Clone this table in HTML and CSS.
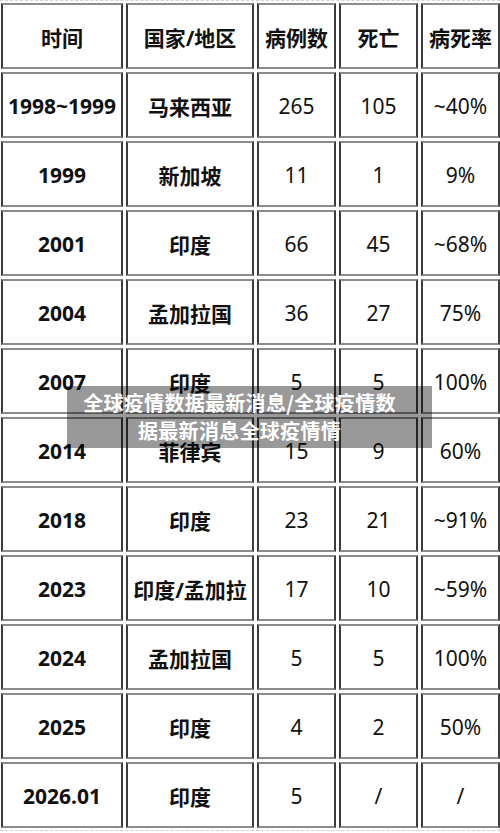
FILE: index.html
```html
<!DOCTYPE html>
<html lang="zh">
<head>
<meta charset="utf-8">
<title>疫情数据</title>
<link rel="stylesheet" href="styles.css">
</head>
<body>
<div class="frame">
  <div class="grid">
    <div class="cell b">时间</div><div class="cell b">国家/地区</div><div class="cell b">病例数</div><div class="cell b">死亡</div><div class="cell b">病死率</div>
    <div class="cell b">1998~1999</div><div class="cell b">马来西亚</div><div class="cell">265</div><div class="cell">105</div><div class="cell">~40%</div>
    <div class="cell b">1999</div><div class="cell b">新加坡</div><div class="cell">11</div><div class="cell">1</div><div class="cell">9%</div>
    <div class="cell b">2001</div><div class="cell b">印度</div><div class="cell">66</div><div class="cell">45</div><div class="cell">~68%</div>
    <div class="cell b">2004</div><div class="cell b">孟加拉国</div><div class="cell">36</div><div class="cell">27</div><div class="cell">75%</div>
    <div class="cell b">2007</div><div class="cell b">印度</div><div class="cell">5</div><div class="cell">5</div><div class="cell">100%</div>
    <div class="cell b">2014</div><div class="cell b">菲律宾</div><div class="cell">15</div><div class="cell">9</div><div class="cell">60%</div>
    <div class="cell b">2018</div><div class="cell b">印度</div><div class="cell">23</div><div class="cell">21</div><div class="cell">~91%</div>
    <div class="cell b">2023</div><div class="cell b">印度/孟加拉</div><div class="cell">17</div><div class="cell">10</div><div class="cell">~59%</div>
    <div class="cell b">2024</div><div class="cell b">孟加拉国</div><div class="cell">5</div><div class="cell">5</div><div class="cell">100%</div>
    <div class="cell b">2025</div><div class="cell b">印度</div><div class="cell">4</div><div class="cell">2</div><div class="cell">50%</div>
    <div class="cell b">2026.01</div><div class="cell b">印度</div><div class="cell">5</div><div class="cell">/</div><div class="cell">/</div>
  </div>
  <div class="caption">全球疫情数据最新消息/全球疫情数<br>据最新消息全球疫情情</div>
</div>
</body>
</html>
```
FILE: styles.css
```css
html, body {
  margin: 0;
  padding: 0;
  background: #ffffff;
}
body {
  font-family: "Noto Sans", "Noto Sans CJK SC", sans-serif;
  color: #111111;
}
.frame {
  position: relative;
  width: 500px;
  height: 831px;
  border-top: 1px dashed #d0d0d0;
  border-bottom: 1px dashed #d0d0d0;
  box-sizing: border-box;
  padding: 2px 0 0 1px;
}
.grid {
  display: grid;
  grid-template-columns: 122px 128px 79px 79px 79px;
  grid-auto-rows: 66px;
  column-gap: 3px;
  row-gap: 3px;
}
.cell {
  box-sizing: border-box;
  border: 2px solid;
  border-color: #8c8c8c #3c3c3c #8c8c8c #3c3c3c;
  display: flex;
  align-items: center;
  justify-content: center;
  font-size: 21px;
  padding-top: 2px;
  white-space: nowrap;
}
.b {
  font-weight: 700;
}
.caption {
  position: absolute;
  left: 67px;
  top: 385px;
  width: 365px;
  height: 62px;
  box-sizing: border-box;
  padding: 3px 30px 0 10px;
  background: rgba(0, 0, 0, 0.4);
  color: #ffffff;
  font-family: "Noto Sans CJK SC", sans-serif;
  font-weight: 700;
  font-size: 20px;
  line-height: 28px;
  letter-spacing: 0.3px;
  text-align: center;
}
```
